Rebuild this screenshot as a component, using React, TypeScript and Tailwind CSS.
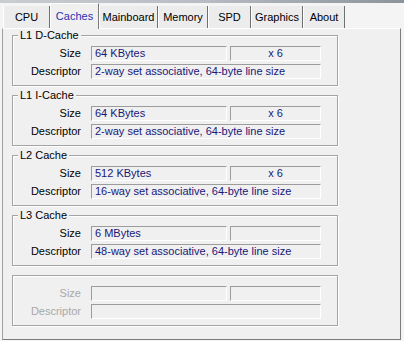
const tabs = [
  { label: "CPU", w: "w-[47px]" },
  { label: "Caches", w: "w-[49px]", active: true },
  { label: "Mainboard", w: "w-[59px]" },
  { label: "Memory", w: "w-[50px]" },
  { label: "SPD", w: "w-[43px]" },
  { label: "Graphics", w: "w-[52px]" },
  { label: "About", w: "w-[42px]" },
];

type Cache = { title: string; size: string; ways: string; descriptor: string };

const caches: Cache[] = [
  { title: "L1 D-Cache", size: "64 KBytes", ways: "x 6", descriptor: "2-way set associative, 64-byte line size" },
  { title: "L1 I-Cache", size: "64 KBytes", ways: "x 6", descriptor: "2-way set associative, 64-byte line size" },
  { title: "L2 Cache", size: "512 KBytes", ways: "x 6", descriptor: "16-way set associative, 64-byte line size" },
  { title: "L3 Cache", size: "6 MBytes", ways: "", descriptor: "48-way set associative, 64-byte line size" },
  { title: "", size: "", ways: "", descriptor: "" },
];

function Field({ children, className = "" }: { children?: React.ReactNode; className?: string }) {
  return (
    <div className={`h-[15px] border-t border-l border-t-[#9c9c9c] border-l-[#9c9c9c] border-b border-r border-b-white border-r-white px-[3px] text-[11px] leading-[13px] text-[#18187a] whitespace-nowrap overflow-hidden ${className}`}>
      {children}
    </div>
  );
}

function CacheGroup({ cache }: { cache: Cache }) {
  const empty = !cache.title;
  const label = empty ? "text-[#a8a8a8]" : "text-black";
  return (
    <div className="relative h-[51px] w-[326px] border border-[#a4a4a4] shadow-[inset_1px_1px_0_#fff,1px_1px_0_#fff] pt-[10px]">
      {cache.title && (
        <span className="absolute -top-[7px] left-[5px] bg-[#f0f0f0] px-[2px] text-[11px] leading-[13px] text-black">
          {cache.title}
        </span>
      )}
      <div className="flex items-center">
        <span className={`w-[68px] text-right text-[11px] leading-[13px] ${label}`}>Size</span>
        <Field className="ml-[10px] w-[136px]">{cache.size}</Field>
        <Field className="ml-[3px] w-[91px] text-center">{cache.ways}</Field>
      </div>
      <div className="mt-[3px] flex items-center">
        <span className={`w-[68px] text-right text-[11px] leading-[13px] ${label}`}>Descriptor</span>
        <Field className="ml-[10px] w-[230px]">{cache.descriptor}</Field>
      </div>
    </div>
  );
}

export default function App() {
  return (
    <div className="flex h-[341px] w-[404px] flex-col overflow-hidden bg-[#f4f4f4]" style={{ fontFamily: '"Liberation Sans", Arial, sans-serif' }}>
      <div className="h-[3px] bg-gradient-to-r from-[#c9cdd2] via-[#b8bdc3] to-[#8c939b]" />
      <div className="flex h-[25px] items-end pl-[3px]">
        {tabs.map((t) =>
          t.active ? (
            <div key={t.label} className={`relative z-10 -mb-px flex h-[26px] ${t.w} items-center justify-center border-l border-r border-t border-l-white border-t-white border-r-[#7a7a7a] bg-[#f0f0f0] text-[11px] text-[#2a33b0]`}>
              {t.label}
            </div>
          ) : (
            <div key={t.label} className={`flex h-[22px] ${t.w} items-center justify-center border-r border-r-[#6f6f6f] border-l border-l-white bg-[#ececec] text-[11px] text-black`}>
              {t.label}
            </div>
          )
        )}
      </div>
      <div className="ml-[2px] h-[312px] w-[399px] border border-t-white border-l-[#a0a0a0] border-r-[#7c7c7c] border-b-[#7c7c7c] bg-[#f0f0f0] pl-[9px] pt-[6px]">
        <div className="flex flex-col gap-[9px]">
          {caches.map((c, i) => (
            <CacheGroup key={i} cache={c} />
          ))}
        </div>
      </div>
    </div>
  );
}
